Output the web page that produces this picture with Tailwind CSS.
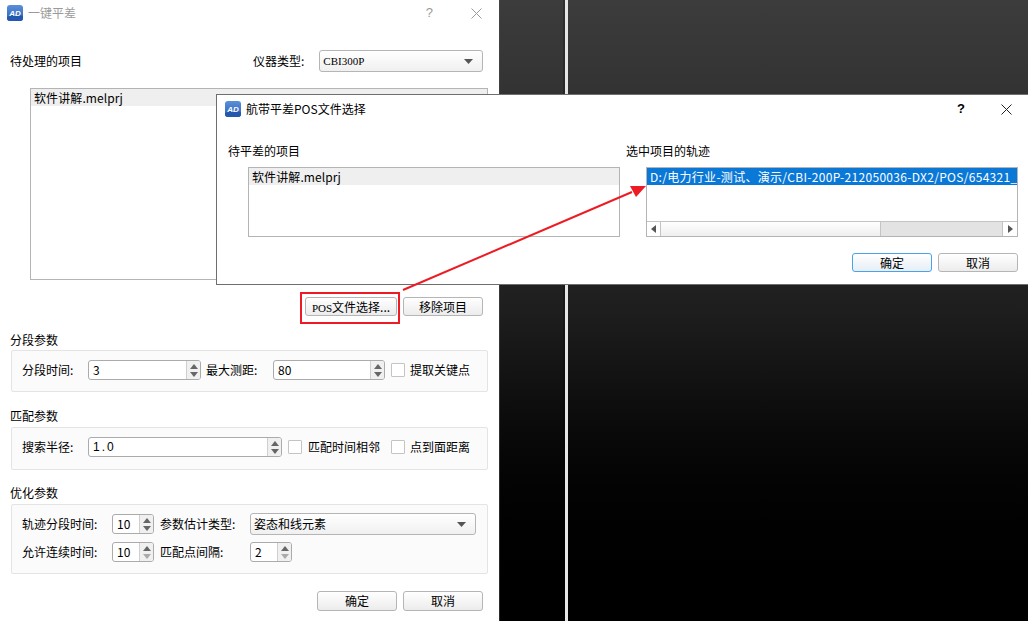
<!DOCTYPE html>
<html lang="zh"><head><meta charset="utf-8">
<script src="https://cdn.jsdelivr.net/npm/@tailwindcss/browser@4"></script>
</head>
<body class="m-0 overflow-hidden">
<div class="relative w-[1028px] h-[621px] overflow-hidden flex bg-gradient-to-b from-[#3c3c3c] via-[#1e1e1e] to-[#000000] text-[12px] leading-[16px] text-black font-['Noto_Sans_CJK_SC',sans-serif]">

  <!-- back dialog -->
  <div class="w-[499px] h-full bg-white shrink-0 flex flex-col">
    <div class="h-[26px] flex items-center pl-[7px] shrink-0">
      <svg width="16" height="16" viewBox="0 0 16 16"><defs><linearGradient id="l1" x1="0" y1="0" x2="0" y2="1"><stop offset="0" stop-color="#5b8fd8"/><stop offset="1" stop-color="#2a62bb"/></linearGradient></defs><rect width="16" height="16" rx="3" fill="url(#l1)"/><path d="M0 12 Q8 8 16 11 V13 a3 3 0 0 1-3 3 H3 a3 3 0 0 1-3-3Z" fill="#2458ae"/><text x="8" y="10.5" text-anchor="middle" font-family="Liberation Sans" font-size="8" font-weight="700" font-style="italic" fill="#fff">AD</text></svg>
      <span class="ml-[5px] text-[#9a9a9a]">一键平差</span>
      <span class="ml-auto mr-[38px] text-[#9a9a9a] font-['Liberation_Sans'] text-[13px]">?</span>
      <svg class="mr-[17px]" width="11" height="11" viewBox="0 0 11 11" stroke="#9a9a9a" fill="none"><path d="M0.5 0.5 10.5 10.5M10.5 0.5 0.5 10.5"/></svg>
    </div>
    <div class="mt-[24px] h-[22px] flex items-center pl-[10px] shrink-0">
      <span class="w-[243px]">待处理的项目</span>
      <span>仪器类型:</span>
      <div class="ml-[15px] w-[164px] h-[22px] border border-[#b5b5b5] rounded-[3px] bg-gradient-to-b from-white to-[#f0f0f0] flex items-center pl-[3px] pr-[9px] font-['Liberation_Serif'] text-[11px]">
        <span>CBI300P</span>
        <svg class="ml-auto" width="9" height="5"><path d="M0 0H9L4.5 5Z" fill="#555"/></svg>
      </div>
    </div>
    <div class="mt-[16px] ml-[30px] w-[458px] h-[192px] border border-[#b4b4b4] shrink-0">
      <div class="h-[17px] bg-[#efefef] pl-[3px] leading-[17px] tracking-[0.1px]">软件讲解.melprj</div>
    </div>
    <div class="mt-[17px] h-[19px] flex justify-end gap-[6px] pr-[16px] shrink-0">
      <button class="w-[92px] h-[19px] border border-[#b5b5b5] rounded-[3px] bg-gradient-to-b from-white to-[#ececec] leading-[17px]"><span class="font-['Liberation_Serif'] text-[11px]">POS</span>文件选择...</button>
      <button class="w-[80px] h-[19px] border border-[#b5b5b5] rounded-[3px] bg-gradient-to-b from-white to-[#ececec] leading-[17px]">移除项目</button>
    </div>

    <div class="ml-[10px] mt-[16px] h-[16px] shrink-0">分段参数</div>
    <div class="ml-[11px] mt-[2px] w-[477px] h-[42px] border border-[#e4e4e4] rounded-[2px] bg-[#fbfbfb] flex items-center pl-[10px] pb-[2px] shrink-0">
      <span class="w-[66px]">分段时间:</span>
      <div class="w-[113px] h-[20px] border border-[#ababab] rounded-[3px] bg-white flex">
        <span class="pl-[4px] flex-1 leading-[18px]">3</span>
        <div class="w-[14px] border-l border-[#cfcfcf] bg-[#f0f0f0] rounded-r-[2px] flex flex-col items-center justify-center gap-[3px]"><svg width="8" height="5"><path d="M0 5H8L4 0Z" fill="#666"/></svg><svg width="8" height="5"><path d="M0 0H8L4 5Z" fill="#666"/></svg></div>
      </div>
      <span class="ml-[5px] w-[67px]">最大测距:</span>
      <div class="w-[112px] h-[20px] border border-[#ababab] rounded-[3px] bg-white flex">
        <span class="pl-[4px] flex-1 leading-[18px]">80</span>
        <div class="w-[14px] border-l border-[#cfcfcf] bg-[#f0f0f0] rounded-r-[2px] flex flex-col items-center justify-center gap-[3px]"><svg width="8" height="5"><path d="M0 5H8L4 0Z" fill="#666"/></svg><svg width="8" height="5"><path d="M0 0H8L4 5Z" fill="#666"/></svg></div>
      </div>
      <span class="ml-[6px] w-[14px] h-[14px] border border-[#c4c4c4] rounded-[1px] bg-white"></span>
      <span class="ml-[5px]">提取关键点</span>
    </div>

    <div class="ml-[10px] mt-[16px] h-[16px] shrink-0">匹配参数</div>
    <div class="ml-[11px] mt-[3px] w-[477px] h-[43px] border border-[#e4e4e4] rounded-[2px] bg-[#fbfbfb] flex items-center pl-[10px] pb-[3px] shrink-0">
      <span class="w-[66px]">搜索半径:</span>
      <div class="w-[194px] h-[20px] border border-[#ababab] rounded-[3px] bg-white flex">
        <span class="pl-[4px] flex-1 leading-[18px] font-['Liberation_Sans'] tracking-[2px]">1.0</span>
        <div class="w-[14px] border-l border-[#cfcfcf] bg-[#f0f0f0] rounded-r-[2px] flex flex-col items-center justify-center gap-[3px]"><svg width="8" height="5"><path d="M0 5H8L4 0Z" fill="#666"/></svg><svg width="8" height="5"><path d="M0 0H8L4 5Z" fill="#666"/></svg></div>
      </div>
      <span class="ml-[6px] w-[14px] h-[14px] border border-[#c4c4c4] rounded-[1px] bg-white"></span>
      <span class="ml-[6px] w-[83px]">匹配时间相邻</span>
      <span class="w-[14px] h-[14px] border border-[#c4c4c4] rounded-[1px] bg-white"></span>
      <span class="ml-[5px]">点到面距离</span>
    </div>

    <div class="ml-[10px] mt-[15px] h-[16px] shrink-0">优化参数</div>
    <div class="ml-[11px] mt-[3px] w-[477px] h-[70px] border border-[#e4e4e4] rounded-[2px] bg-[#fbfbfb] pl-[10px] pt-[8px] flex flex-col gap-[7px] shrink-0">
      <div class="h-[22px] flex items-center">
        <span class="w-[90px]">轨迹分段时间:</span>
        <div class="w-[42px] h-[20px] border border-[#ababab] rounded-[3px] bg-white flex">
          <span class="pl-[4px] flex-1 leading-[18px]">10</span>
          <div class="w-[14px] border-l border-[#cfcfcf] bg-[#f0f0f0] rounded-r-[2px] flex flex-col items-center justify-center gap-[3px]"><svg width="8" height="5"><path d="M0 5H8L4 0Z" fill="#666"/></svg><svg width="8" height="5"><path d="M0 0H8L4 5Z" fill="#666"/></svg></div>
        </div>
        <span class="ml-[6px] w-[90px]">参数估计类型:</span>
        <div class="w-[226px] h-[22px] border border-[#b5b5b5] rounded-[3px] bg-gradient-to-b from-white to-[#f0f0f0] flex items-center pl-[3px] pr-[9px]">
          <span>姿态和线元素</span>
          <svg class="ml-auto" width="9" height="5"><path d="M0 0H9L4.5 5Z" fill="#555"/></svg>
        </div>
      </div>
      <div class="h-[20px] flex items-center">
        <span class="w-[90px]">允许连续时间:</span>
        <div class="w-[42px] h-[20px] border border-[#ababab] rounded-[3px] bg-white flex">
          <span class="pl-[4px] flex-1 leading-[18px]">10</span>
          <div class="w-[14px] border-l border-[#cfcfcf] bg-[#f0f0f0] rounded-r-[2px] flex flex-col items-center justify-center gap-[3px]"><svg width="8" height="5"><path d="M0 5H8L4 0Z" fill="#666"/></svg><svg width="8" height="5"><path d="M0 0H8L4 5Z" fill="#aaa"/></svg></div>
        </div>
        <span class="ml-[6px] w-[90px]">匹配点间隔:</span>
        <div class="w-[42px] h-[20px] border border-[#ababab] rounded-[3px] bg-white flex">
          <span class="pl-[4px] flex-1 leading-[18px]">2</span>
          <div class="w-[14px] border-l border-[#cfcfcf] bg-[#f0f0f0] rounded-r-[2px] flex flex-col items-center justify-center gap-[3px]"><svg width="8" height="5"><path d="M0 5H8L4 0Z" fill="#666"/></svg><svg width="8" height="5"><path d="M0 0H8L4 5Z" fill="#aaa"/></svg></div>
        </div>
      </div>
    </div>
    <div class="mt-[17px] flex justify-end gap-[6px] pr-[16px] shrink-0">
      <button class="w-[80px] h-[20px] border border-[#b5b5b5] rounded-[3px] bg-gradient-to-b from-white to-[#ececec] leading-[18px]">确定</button>
      <button class="w-[80px] h-[20px] border border-[#b5b5b5] rounded-[3px] bg-gradient-to-b from-white to-[#ececec] leading-[18px]">取消</button>
    </div>
  </div>

  <div class="w-[66px] h-full border-l border-r-2 border-l-[#4a4a4a]/60 border-r-[#000]/20 shrink-0"></div>
  <div class="w-[3px] h-full bg-[#e6e6e6] shrink-0"></div>

  <!-- front dialog -->
  <div class="absolute left-[216px] top-[94px] w-[812px] h-[191px] bg-white border border-r-0 border-[#6e6e6e] flex flex-col">
    <div class="h-[28px] flex items-center pl-[8px] shrink-0">
      <svg width="16" height="16" viewBox="0 0 16 16"><defs><linearGradient id="l2" x1="0" y1="0" x2="0" y2="1"><stop offset="0" stop-color="#5b8fd8"/><stop offset="1" stop-color="#2a62bb"/></linearGradient></defs><rect width="16" height="16" rx="3" fill="url(#l2)"/><path d="M0 12 Q8 8 16 11 V13 a3 3 0 0 1-3 3 H3 a3 3 0 0 1-3-3Z" fill="#2458ae"/><text x="8" y="10.5" text-anchor="middle" font-family="Liberation Sans" font-size="8" font-weight="700" font-style="italic" fill="#fff">AD</text></svg>
      <span class="ml-[5px]">航带平差POS文件选择</span>
      <span class="ml-auto mr-[36px] font-['Liberation_Sans'] text-[13px] font-bold">?</span>
      <svg class="mr-[16px]" width="11" height="11" viewBox="0 0 11 11" stroke="#222" fill="none"><path d="M0.5 0.5 10.5 10.5M10.5 0.5 0.5 10.5"/></svg>
    </div>
    <div class="mt-[20px] h-[16px] flex pl-[11px] shrink-0">
      <span class="w-[398px]">待平差的项目</span>
      <span>选中项目的轨迹</span>
    </div>
    <div class="mt-[8px] h-[70px] flex pl-[31px] shrink-0 gap-[26px]">
      <div class="w-[372px] h-[70px] border border-[#b4b4b4]">
        <div class="h-[17px] bg-[#efefef] pl-[3px] leading-[17px] tracking-[0.1px]">软件讲解.melprj</div>
      </div>
      <div class="w-[372px] h-[70px] border border-[#b4b4b4] flex flex-col">
        <div class="h-[17px] bg-[#0a78d7] pl-[3px] leading-[17px] text-white whitespace-nowrap overflow-hidden tracking-[0.3px]">D:/电力行业-测试、演示/CBI-200P-212050036-DX2/POS/654321_</div>
        <div class="flex-1"></div>
        <div class="h-[15px] border-t border-[#c4c4c4] flex">
          <div class="w-[14px] border-r border-[#c4c4c4] flex items-center justify-center"><svg width="5" height="8"><path d="M5 0V8L0 4Z" fill="#555"/></svg></div>
          <div class="w-[220px] border-r border-[#c4c4c4] bg-gradient-to-b from-white to-[#efefef]"></div>
          <div class="flex-1 bg-[#e3e3e3] border-r border-[#c4c4c4]"></div>
          <div class="w-[14px] flex items-center justify-center"><svg width="5" height="8"><path d="M0 0V8L5 4Z" fill="#555"/></svg></div>
        </div>
      </div>
    </div>
    <div class="mt-[16px] pl-[635px] flex gap-[6px] shrink-0">
      <button class="w-[80px] h-[19px] border border-[#4aa3e8] rounded-[3px] bg-gradient-to-b from-white to-[#e6eef6] leading-[17px]">确定</button>
      <button class="w-[80px] h-[19px] border border-[#b5b5b5] rounded-[3px] bg-gradient-to-b from-white to-[#ececec] leading-[17px]">取消</button>
    </div>
  </div>

  <!-- annotations -->
  <div class="absolute left-[300px] top-[292px] w-[100px] h-[32px] border-2 border-[#ed1c24]"></div>
  <svg class="absolute left-0 top-0 pointer-events-none" width="1028" height="621"><path d="M403 290 632 192" stroke="#ed1c24" stroke-width="2" fill="none"/><path d="M646 186 630 186 636 197Z" fill="#ed1c24"/></svg>
</div>
</body></html>
